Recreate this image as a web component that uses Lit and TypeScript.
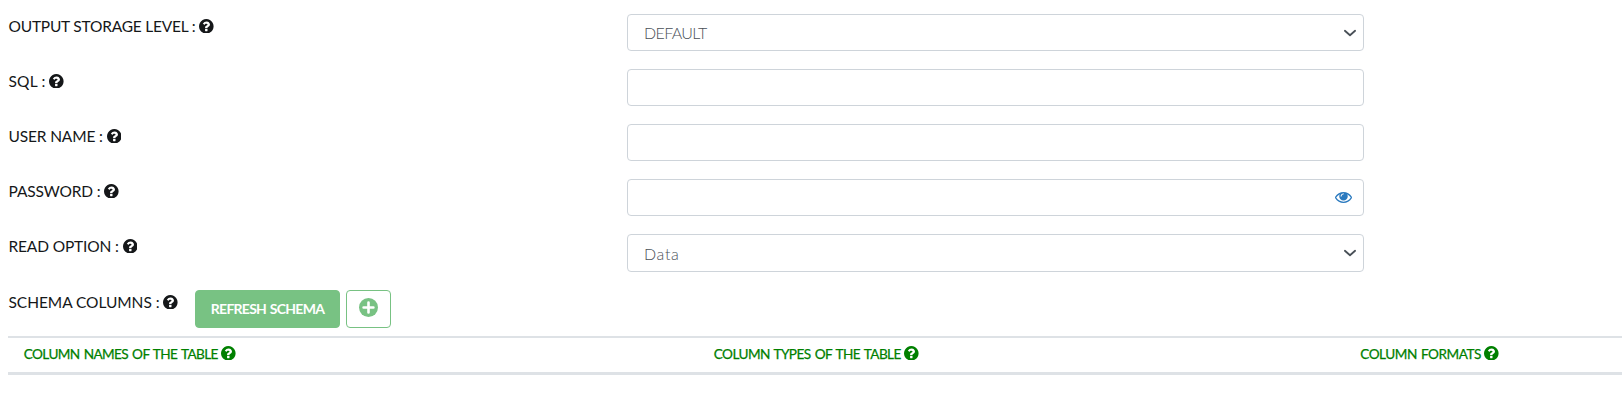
import { LitElement, html, css, svg, nothing } from "lit";
import { customElement, property } from "lit/decorators.js";

const QUESTION =
  "M1024 1376v-192q0-14-9-23t-23-9h-192q-14 0-23 9t-9 23v192q0 14 9 23t23 9h192q14 0 23-9t9-23zm256-672q0-88-55.5-163t-138.5-116-170-41q-243 0-371 213-15 24 8 42l132 100q7 6 19 6 16 0 25-12 53-68 86-92 34-24 86-24 48 0 85.5 26t37.5 59q0 38-20 61t-68 45q-63 28-115.5 86.5t-52.5 125.5v36q0 14 9 23t23 9h192q14 0 23-9t9-23q0-19 21.5-49.5t54.5-49.5q32-18 49-28.5t46-35 44.5-48 28-60.5 12.5-81zm384 192q0 209-103 385.5t-279.5 279.5-385.5 103-385.5-103-279.5-279.5-103-385.5 103-385.5 279.5-279.5 385.5-103 385.5 103 279.5 279.5 103 385.5z";
const EYE =
  "M1664 960q-152-236-381-353 61 104 61 225 0 185-131.5 316.5t-316.5 131.5-316.5-131.5-131.5-316.5q0-121 61-225-229 117-381 353 133 205 333.5 326.5t434.5 121.5 434.5-121.5 333.5-326.5zm-720-384q0-20-14-34t-34-14q-125 0-214.5 89.5t-89.5 214.5q0 20 14 34t34 14 34-14 14-34q0-86 61-147t147-61q20 0 34-14t14-34zm848 384q0 34-20 69-140 230-376.5 368.5t-499.5 138.5-499.5-139-376.5-368q-20-35-20-69t20-69q140-229 376.5-368t499.5-139 499.5 139 376.5 368q20 35 20 69z";

/** Text tracked so that it fills the given width exactly. */
@customElement("tracked-text")
export class TrackedText extends LitElement {
  @property() text = "";
  @property({ type: Number }) width = 0;

  static styles = css`
    :host { display: inline-block; white-space: nowrap; }
    .text { display: inline-block; }
  `;

  updated() {
    const el = this.renderRoot.querySelector<HTMLElement>(".text")!;
    el.style.letterSpacing = "0px";
    const natural = el.getBoundingClientRect().width;
    el.style.letterSpacing = `${(this.width - natural) / this.text.length}px`;
  }

  render() {
    return html`<span class="text">${this.text}</span>`;
  }
}

type Field = { label: string; width: number; kind: string; value?: string; valueWidth?: number };

@customElement("app-root")
export class AppRoot extends LitElement {
  fields: Field[] = [
    { label: "OUTPUT STORAGE LEVEL :", width: 187, kind: "select", value: "DEFAULT", valueWidth: 62.7 },
    { label: "SQL :", width: 37, kind: "text" },
    { label: "USER NAME :", width: 94.3, kind: "text" },
    { label: "PASSWORD :", width: 92, kind: "password" },
    { label: "READ OPTION :", width: 110.3, kind: "select", value: "Data", valueWidth: 35.5 },
  ];

  static styles = css`
    :host {
      display: block;
      box-sizing: border-box;
      height: 408px;
      overflow: hidden;
      padding: 14px 0 0 8px;
      background: #fff;
      color: #151719;
      font-family: Lato, "Open Sans", sans-serif;
      font-size: 15.5px;
      line-height: 24px;
    }
    svg { display: block; flex: none; }
    .form { display: grid; grid-template-columns: 619px 737px; row-gap: 18px; }
    .label { display: flex; align-items: flex-start; gap: 3.8px; height: 24px; padding-left: 0.5px; }
    .label svg { margin-top: 4.7px; }
    .field {
      box-sizing: border-box;
      display: flex;
      align-items: center;
      justify-content: space-between;
      height: 37px;
      border: 1px solid #ced4da;
      border-radius: 4px;
      padding: 0 7.5px 0 16px;
      color: #495057;
      font-weight: 300;
      font-size: 16px;
    }
    .field.select:last-child { height: 38px; }
    .field tracked-text { margin-top: 1px; }
    .field.select:last-child tracked-text { margin-top: 2px; }
    .field.password { justify-content: flex-end; padding-right: 11px; }
    .eye { fill: #2b7abf; }
    .schema { display: flex; align-items: flex-start; padding-top: 18px; height: 38px; }
    .schema .label { width: 186.5px; }
    .refresh, .add {
      box-sizing: border-box;
      display: flex;
      justify-content: center;
      height: 38px;
      border: 1px solid #78c283;
      border-radius: 4px;
    }
    .refresh {
      width: 145px;
      align-items: center;
      padding-bottom: 1px;
      background: #78c283;
      color: #fff;
      font-size: 14px;
      font-weight: 700;
      word-spacing: 1px;
    }
    .add { width: 45px; margin-left: 6px; padding-top: 7px; }
    .head {
      display: grid;
      grid-template-columns: 690px 646.5px 1fr;
      box-sizing: border-box;
      height: 39px;
      margin-top: 8px;
      padding: 3px 0 0 15px;
      border-top: 2px solid #dee2e6;
      border-bottom: 3px solid #dee2e6;
      color: #008000;
      font-size: 13.6px;
      word-spacing: 1.2px;
      -webkit-text-stroke: 0.25px #008000;
    }
    .head .label { gap: 3.2px; padding-left: 0.8px; }
    .head tracked-text { padding-top: 1px; }
    .head svg { margin-top: 4.8px; }
  `;

  help() {
    return html`<svg width="14.6" height="14.6" viewBox="128 128 1536 1536" fill="currentColor">${svg`<path d=${QUESTION} />`}</svg>`;
  }

  label(text: string, width: number) {
    return html`<div class="label"><tracked-text .text=${text} .width=${width}></tracked-text>${this.help()}</div>`;
  }

  control(f: Field) {
    return html`<div class="field ${f.kind}">
      ${f.kind === "select"
        ? html`<tracked-text .text=${f.value!} .width=${f.valueWidth!}></tracked-text>
            <svg width="12" height="12" viewBox="0 0 16 16" fill="none" stroke="#495057" stroke-width="2.4" stroke-linecap="round" stroke-linejoin="round"><path d="M1.2 5l6.8 6 6.8-6" /></svg>`
        : nothing}
      ${f.kind === "password"
        ? html`<svg class="eye" width="17" height="11" viewBox="0 384 1792 1152"><path d=${EYE} /></svg>`
        : nothing}
    </div>`;
  }

  render() {
    return html`
      <div class="form">${this.fields.map((f) => html`${this.label(f.label, f.width)}${this.control(f)}`)}</div>
      <div class="schema">
        ${this.label("SCHEMA COLUMNS :", 151)}
        <div class="refresh"><tracked-text .text=${"REFRESH SCHEMA"} .width=${113.3}></tracked-text></div>
        <div class="add">
          <svg width="19" height="19" viewBox="0 0 19 19">
            <circle cx="9.5" cy="9.5" r="9.5" fill="#78c283" />
            <path d="M9.5 4.6v9.8M4.6 9.5h9.8" stroke="#fff" stroke-width="2.6" stroke-linecap="round" />
          </svg>
        </div>
      </div>
      <div class="head">
        ${this.label("COLUMN NAMES OF THE TABLE", 194)}
        ${this.label("COLUMN TYPES OF THE TABLE", 187)}
        ${this.label("COLUMN FORMATS", 120.5)}
      </div>
    `;
  }
}
